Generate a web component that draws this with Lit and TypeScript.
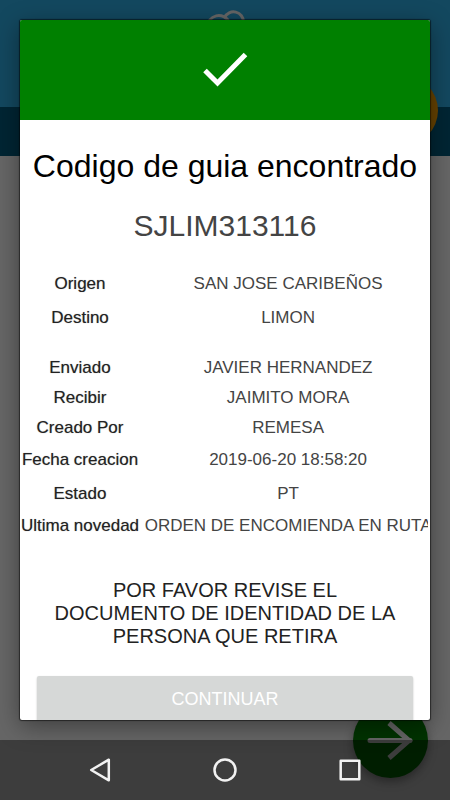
import { LitElement, html, css } from "lit";
import { customElement } from "lit/decorators.js";

type Row = [label: string, value: string];

const ROUTE: Row[] = [
  ["Origen", "SAN JOSE CARIBEÑOS"],
  ["Destino", "LIMON"],
];

const DETAILS: Row[] = [
  ["Enviado", "JAVIER HERNANDEZ"],
  ["Recibir", "JAIMITO MORA"],
  ["Creado Por", "REMESA"],
  ["Fecha creacion", "2019-06-20 18:58:20"],
  ["Estado", "PT"],
  ["Ultima novedad", "ORDEN DE ENCOMIENDA EN RUTA"],
];

@customElement("guide-dialog")
class GuideDialog extends LitElement {
  static styles = css`
    :host {
      display: block;
      overflow: hidden;
      background: #fff;
      border-radius: 2px;
      box-shadow: 0 0 1px 1px rgba(0, 0, 0, 0.5), 0 6px 24px rgba(0, 0, 0, 0.4);
      text-align: center;
    }
    .banner {
      display: flex;
      align-items: center;
      justify-content: center;
      height: 100px;
      background: #008000;
    }
    .title {
      margin: 28px 0 0;
      font-size: 32px;
      line-height: 36px;
      font-weight: 400;
      color: #000;
      white-space: nowrap;
    }
    .code {
      margin: 24px 0 0;
      font-size: 30px;
      line-height: 36px;
      color: #444;
    }
    .sheet {
      margin: 23px 2px 0 0;
      overflow: hidden;
    }
    .table {
      border-collapse: collapse;
      min-width: 102%;
      white-space: nowrap;
      line-height: 20px;
    }
    .group + .group::before {
      content: "";
      display: block;
      height: 18px;
    }
    .label,
    .value {
      height: 30px;
      padding: 0;
      font-size: 17px;
      font-weight: 400;
      text-align: center;
      vertical-align: middle;
    }
    .tall .label,
    .tall .value {
      height: 34px;
    }
    .label {
      width: 120px;
      color: #222;
      text-shadow: 0 0 1px rgba(0, 0, 0, 0.4);
    }
    .value {
      color: #444;
    }
    .notice {
      margin: 38px 32px 0;
      font-size: 20px;
      line-height: 23px;
      color: #222;
    }
    .continue {
      display: block;
      width: calc(100% - 34px);
      height: 46px;
      margin: 28px 17px 0;
      padding: 0;
      border: 0;
      border-radius: 2px;
      background: #d6d8d7;
      box-shadow: 0 1px 2px rgba(0, 0, 0, 0.25);
      color: #fff;
      font: 18px/46px "Liberation Sans", Arial, sans-serif;
    }
  `;

  private group(rows: Row[], tall: boolean) {
    return html`<tbody class="group">
      ${rows.map(
        ([label, value]) => html`<tr
          class=${tall || label === "Fecha creacion" || label === "Estado" ? "tall" : ""}
        >
          <th class="label" scope="row">${label}</th>
          <td class="value">${value}</td>
        </tr>`
      )}
    </tbody>`;
  }

  render() {
    return html`
      <div class="banner">
        <svg width="60" height="60" viewBox="0 0 60 60" aria-hidden="true">
          <path d="M10 30.500 L22.500 43 L50.500 14.500" fill="none" stroke="#fff" stroke-width="5" />
        </svg>
      </div>
      <h1 class="title">Codigo de guia encontrado</h1>
      <p class="code">SJLIM313116</p>
      <div class="sheet">
        <table class="table">
          ${this.group(ROUTE, true)} ${this.group(DETAILS, false)}
        </table>
      </div>
      <p class="notice">POR FAVOR REVISE EL DOCUMENTO DE IDENTIDAD DE LA PERSONA QUE RETIRA</p>
      <button class="continue" type="button">CONTINUAR</button>
    `;
  }
}

@customElement("app-root")
class AppRoot extends LitElement {
  static styles = css`
    :host {
      display: flex;
      flex-direction: column;
      position: relative;
      height: 100vh;
      overflow: hidden;
      background: #666;
      font-family: "Liberation Sans", Arial, sans-serif;
    }
    .header {
      height: 107px;
      padding-top: 8px;
      box-sizing: border-box;
      text-align: center;
      background: #13485f;
    }
    .strip {
      height: 49px;
      background: #002533;
    }
    .content {
      flex: 1;
    }
    .badge {
      position: absolute;
      top: 75px;
      right: 12px;
      width: 71px;
      height: 71px;
      border-radius: 50%;
      background: #664200;
    }
    .next {
      position: absolute;
      right: 22px;
      bottom: 22px;
      width: 75px;
      height: 75px;
      padding: 0;
      border: 0;
      border-radius: 50%;
      background: #003300;
      box-shadow: 0 4px 10px rgba(0, 0, 0, 0.35);
    }
    .nav {
      position: relative;
      display: flex;
      align-items: center;
      justify-content: center;
      gap: 85px;
      height: 60px;
      background: rgba(0, 0, 0, 0.4);
    }
    .key {
      display: flex;
      align-items: center;
      justify-content: center;
      width: 40px;
      height: 40px;
      padding: 0;
      border: 0;
      background: none;
    }
    .dialog {
      position: absolute;
      inset: 20px 20px 80px;
    }
  `;

  render() {
    return html`
      <header class="header">
        <svg width="50" height="40" viewBox="0 0 50 40" fill="none" stroke="#666" stroke-width="3" aria-hidden="true">
          <path d="M7.500 19 A11.300 11.300 0 0 1 29 14" />
          <path d="M24.500 9.500 A10 10 0 0 1 43.500 14" />
        </svg>
      </header>
      <div class="strip"></div>
      <main class="content"></main>
      <span class="badge"></span>
      <button class="next" type="button" aria-label="Siguiente">
        <svg width="75" height="75" viewBox="0 0 75 75" fill="none" stroke="#666" stroke-width="5" aria-hidden="true">
          <path d="M17 37.500 H57" stroke-linecap="round" />
          <path d="M36 20 L56 37.500 L36 55" />
        </svg>
      </button>
      <nav class="nav" aria-label="Sistema">
        <button class="key" type="button" aria-label="Atrás">
          <svg width="40" height="40" viewBox="0 0 40 40" fill="none" stroke="#f2f2f2" stroke-width="2.500" stroke-linejoin="round">
            <path d="M28.800 9.700 V30.300 L11.200 20 Z" />
          </svg>
        </button>
        <button class="key" type="button" aria-label="Inicio">
          <svg width="40" height="40" viewBox="0 0 40 40" fill="none" stroke="#f2f2f2" stroke-width="2.500">
            <circle cx="20" cy="20" r="10.500" />
          </svg>
        </button>
        <button class="key" type="button" aria-label="Recientes">
          <svg width="40" height="40" viewBox="0 0 40 40" fill="none" stroke="#f2f2f2" stroke-width="2.500" stroke-linejoin="round">
            <rect x="10.700" y="10.700" width="18.600" height="18.600" />
          </svg>
        </button>
      </nav>
      <guide-dialog class="dialog" role="dialog" aria-modal="true"></guide-dialog>
    `;
  }
}
